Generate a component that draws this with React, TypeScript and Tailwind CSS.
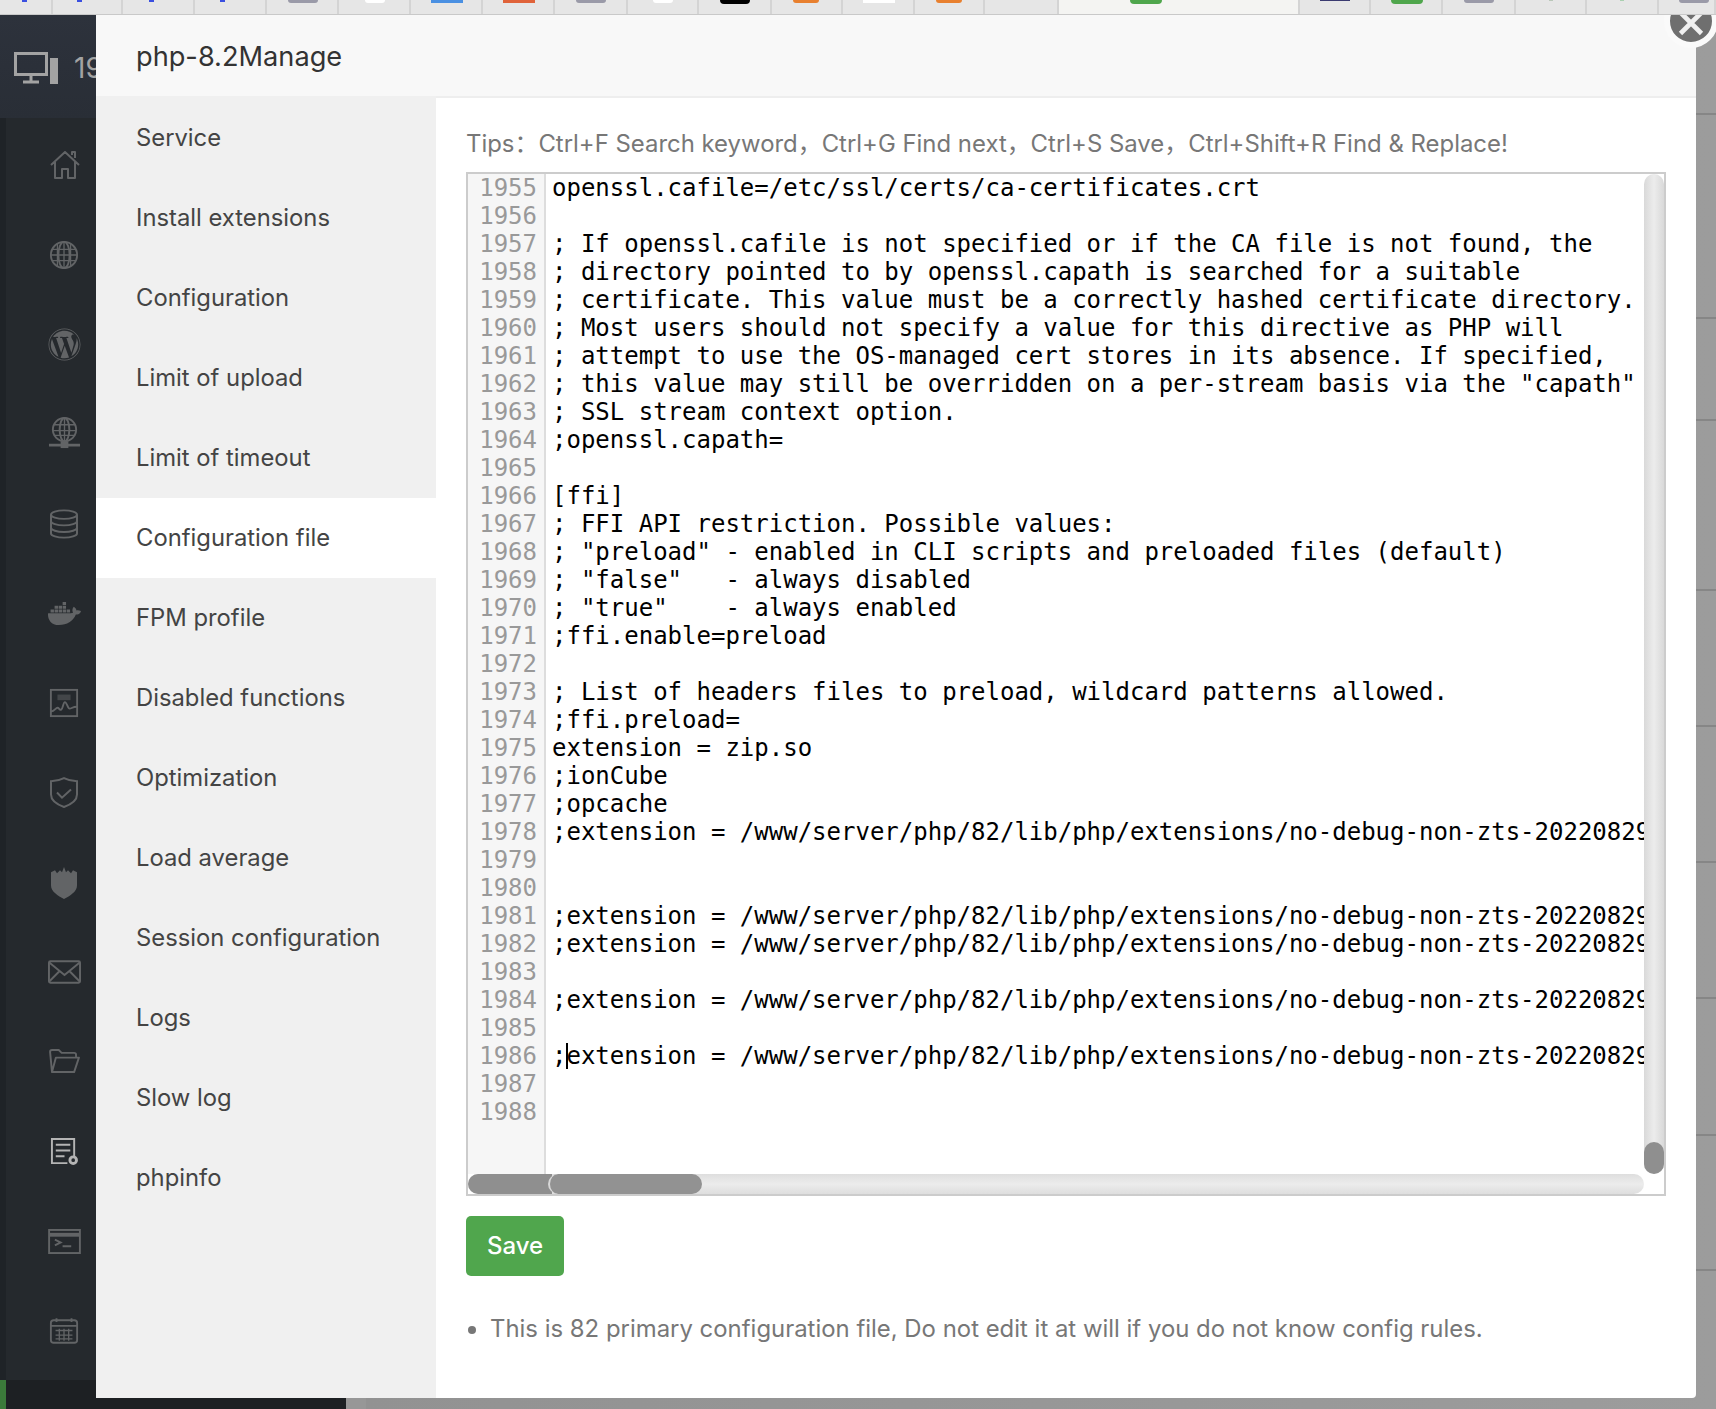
import React from 'react';
import { FaDocker, FaWordpress } from 'react-icons/fa';

const tabs = [
  { w: 'w-[53px]', mark: 'w-[5px] h-[2px] bg-[#3a4fe0]', active: false, pad: 'pl-[22px]' },
  { w: 'w-[70px]', mark: 'w-[5px] h-[2px] bg-[#3a4fe0]', active: false, pad: 'pl-[24px]' },
  { w: 'w-[72px]', mark: 'w-[5px] h-[2px] bg-[#3a4fe0]', active: false, pad: 'pl-[26px]' },
  { w: 'w-[72px]', mark: 'w-[5px] h-[2px] bg-[#3a4fe0]', active: false, pad: 'pl-[25px]' },
  { w: 'w-[72px]', mark: 'w-[30px] h-[3px] bg-[#9a9aa8] rounded-b-lg', active: false, pad: 'pl-[21px]' },
  { w: 'w-[72px]', mark: 'w-[20px] h-[3px] bg-white rounded-b-lg', active: false, pad: 'pl-[26px]' },
  { w: 'w-[72px]', mark: 'w-[32px] h-[3px] bg-[#4a90e2]', active: false, pad: 'pl-[20px]' },
  { w: 'w-[72px]', mark: 'w-[32px] h-[3px] bg-[#e0633a]', active: false, pad: 'pl-[20px]' },
  { w: 'w-[73px]', mark: 'w-[30px] h-[3px] bg-[#9a9aa8] rounded-b-lg', active: false, pad: 'pl-[21px]' },
  { w: 'w-[71px]', mark: 'w-[20px] h-[3px] bg-white rounded-b-lg', active: false, pad: 'pl-[25px]' },
  { w: 'w-[73px]', mark: 'w-[30px] h-[4px] bg-black rounded-b-md', active: false, pad: 'pl-[21px]' },
  { w: 'w-[71px]', mark: 'w-[26px] h-[3px] bg-[#e8802f] rounded-b-lg', active: false, pad: 'pl-[21px]' },
  { w: 'w-[72px]', mark: 'w-[32px] h-[3px] bg-white', active: false, pad: 'pl-[20px]' },
  { w: 'w-[70px]', mark: 'w-[26px] h-[3px] bg-[#e8802f] rounded-b-lg', active: false, pad: 'pl-[21px]' },
  { w: 'w-[74px]', mark: 'w-0 h-0', active: false, pad: 'pl-0' },
  { w: 'w-[241px]', mark: 'w-[32px] h-[4px] bg-[#4fa64c] rounded-b-md', active: true, pad: 'pl-[71px]' },
  { w: 'w-[71px]', mark: 'w-[30px] h-[1px] bg-[#3a3a70]', active: false, pad: 'pl-[20px]' },
  { w: 'w-[72px]', mark: 'w-[32px] h-[4px] bg-[#4fa64c] rounded-b-md', active: false, pad: 'pl-[20px]' },
  { w: 'w-[73px]', mark: 'w-[30px] h-[3px] bg-[#9a9aa8] rounded-b-lg', active: false, pad: 'pl-[21px]' },
  { w: 'w-[71px]', mark: 'w-[4px] h-[1px] bg-[#b9c7b9]', active: false, pad: 'pl-[33px]' },
  { w: 'w-[72px]', mark: 'w-[4px] h-[1px] bg-[#a9d0b0]', active: false, pad: 'pl-[33px]' },
  { w: 'w-[57px]', mark: 'w-[30px] h-[3px] bg-[#9a9aa8] rounded-b-lg', active: false, pad: 'pl-[20px]' },
];

const menu = [
  'Service',
  'Install extensions',
  'Configuration',
  'Limit of upload',
  'Limit of timeout',
  'Configuration file',
  'FPM profile',
  'Disabled functions',
  'Optimization',
  'Load average',
  'Session configuration',
  'Logs',
  'Slow log',
  'phpinfo',
];

const ext = ';extension = /www/server/php/82/lib/php/extensions/no-debug-non-zts-20220829/';

const code = [
  'openssl.cafile=/etc/ssl/certs/ca-certificates.crt',
  '',
  '; If openssl.cafile is not specified or if the CA file is not found, the',
  '; directory pointed to by openssl.capath is searched for a suitable',
  '; certificate. This value must be a correctly hashed certificate directory.',
  '; Most users should not specify a value for this directive as PHP will',
  '; attempt to use the OS-managed cert stores in its absence. If specified,',
  '; this value may still be overridden on a per-stream basis via the "capath"',
  '; SSL stream context option.',
  ';openssl.capath=',
  '',
  '[ffi]',
  '; FFI API restriction. Possible values:',
  '; "preload" - enabled in CLI scripts and preloaded files (default)',
  '; "false"   - always disabled',
  '; "true"    - always enabled',
  ';ffi.enable=preload',
  '',
  '; List of headers files to preload, wildcard patterns allowed.',
  ';ffi.preload=',
  'extension = zip.so',
  ';ionCube',
  ';opcache',
  ext + 'opcache.so',
  '',
  '',
  ext + 'xsl.so',
  ext + 'gmp.so',
  '',
  ext + 'imap.so',
  '',
  ext + 'exif.so',
  '',
  '',
];

const bgRows = [
  'h-[100px]',
  'h-[204px]',
  'h-[102px]',
  'h-[170px]',
  'h-[136px]',
  'h-[136px]',
  'h-[136px]',
  'h-[137px]',
  'h-[135px]',
];

const sw = { fill: 'none', stroke: 'currentColor', strokeWidth: 2 };

const icons = [
  <svg viewBox="0 0 32 32" className="w-[32px] h-[32px] ml-[2px]" {...sw}>
    <path d="M2 16 16 3l14 13M6 13v16h7v-9h6v9h7V13M23 6V3h3v6" strokeLinejoin="round" />
  </svg>,
  <svg viewBox="0 0 32 32" className="w-[30px] h-[30px]" {...sw}>
    <circle cx="16" cy="16" r="14" />
    <ellipse cx="16" cy="16" rx="6" ry="14" />
    <path d="M3 10h26M2 16h28M3 22h26M16 2v28M9 4v24M23 4v24" strokeWidth="1.4" />
  </svg>,
  <FaWordpress className="w-[33px] h-[33px]" />,
  <svg viewBox="0 0 34 34" className="w-[33px] h-[33px]" {...sw}>
    <circle cx="17" cy="13" r="12" />
    <ellipse cx="17" cy="13" rx="5" ry="12" />
    <path d="M6 8h22M5 14h24M6 19h22M17 1v24" strokeWidth="1.4" />
    <path d="M1 29h32" strokeWidth="3" />
    <rect x="13" y="25" width="8" height="7" fill="currentColor" stroke="none" />
  </svg>,
  <svg viewBox="0 0 32 32" className="w-[32px] h-[30px]" {...sw} preserveAspectRatio="none">
    <ellipse cx="16" cy="6" rx="13" ry="4.5" />
    <path d="M3 6v20c0 2.5 6 4.5 13 4.5s13-2 13-4.5V6M3 13c0 2.5 6 4.5 13 4.5s13-2 13-4.5M3 20c0 2.5 6 4.5 13 4.5s13-2 13-4.5" />
  </svg>,
  <FaDocker className="w-[33px] h-[33px]" />,
  <svg viewBox="0 0 32 32" className="w-[30px] h-[30px]" {...sw}>
    <rect x="2" y="2" width="28" height="28" />
    <path d="M2 25c4 0 5-4 7-4s2 3 4 2 2-8 4-8 3 7 5 7 3-2 8-2" />
    <rect x="9" y="7" width="14" height="6" fill="currentColor" stroke="none" opacity="0.5" />
  </svg>,
  <svg viewBox="0 0 32 32" className="w-[32px] h-[33px]" {...sw} preserveAspectRatio="none">
    <path d="M3 5c6 0 9-1 13-3 4 2 7 3 13 3v13c0 6-7 10-13 12C10 28 3 24 3 18Z" />
    <path d="m9 16 5 5 9-8" />
  </svg>,
  <svg viewBox="0 0 32 32" className="w-[32px] h-[33px]" preserveAspectRatio="none">
    <path
      d="M3 6l4-2 2 3 3-3 2 2 2-5 2 5 2-2 3 3 2-3 4 2v13c0 6-7 10-13 13C10 29 3 25 3 19Z"
      fill="currentColor"
    />
  </svg>,
  <svg viewBox="0 0 34 24" className="w-[33px] h-[24px]" {...sw}>
    <rect x="1" y="1" width="32" height="22" rx="1.5" />
    <path d="m1 2 16 13L33 2M1 22l11-11M33 22 22 11" />
  </svg>,
  <svg viewBox="0 0 32 26" className="w-[31px] h-[25px]" {...sw}>
    <path d="M3 24 1 3c0-1 .5-2 2-2h7l3 3h13c1 0 2 1 2 2v2M3 24h23l5-15H7Z" strokeLinejoin="round" />
  </svg>,
  <svg viewBox="0 0 30 30" className="w-[29px] h-[29px] text-[#b4b4b4]" {...sw}>
    <path d="M18 27H2V2h23v18" />
    <path d="M6 8h15M6 14h15M6 20h9" />
    <circle cx="24" cy="24" r="3.4" strokeWidth="3" />
  </svg>,
  <svg viewBox="0 0 34 26" className="w-[33px] h-[25px]" {...sw}>
    <rect x="1" y="1" width="32" height="24" />
    <path d="M1 6h32" strokeWidth="4" />
    <path d="m7 11 6 3-6 3M15 18h9" />
  </svg>,
  <svg viewBox="0 0 32 28" className="w-[30px] h-[27px]" {...sw}>
    <rect x="2" y="3" width="28" height="24" rx="3" />
    <path d="M2 9h28M8 1v4M24 1v4" />
    <path d="M7 14h18M7 19h18M7 23h18M11 12v13M16 12v13M21 12v13" strokeWidth="1.4" />
  </svg>,
];

export default function App() {
  return (
    <div className="relative w-[1716px] h-[1409px] overflow-hidden bg-[#8f8f8f] font-['Inter','Noto_Sans_CJK_SC',sans-serif]">
      {/* browser tab strip */}
      <div className="relative z-20 flex h-[15px] bg-[#e6e6e6] border-b border-[#c9c9c9]">
        {tabs.map((t, i) => (
          <div key={i} className={`${t.w} ${t.pad} h-[14px] shrink-0 border-r-2 border-[#d4d4d4] ${t.active ? 'bg-[#f4f4f2]' : ''}`}>
            <div className={t.mark}></div>
          </div>
        ))}
      </div>

      {/* page behind the dialog */}
      <div className="flex h-[1394px]">
        <div className="w-[346px] shrink-0 flex flex-col bg-[#1d2023]">
          <div className="h-[103px] shrink-0 flex items-center gap-[16px] pl-[14px] pt-[2px] bg-gradient-to-b from-[#2d323c] to-[#292e36] text-[#a3a3a3]">
            <svg viewBox="0 0 44 32" className="w-[44px] h-[32px]" fill="none" stroke="currentColor">
              <rect x="1.5" y="1.5" width="31" height="21" strokeWidth="3" />
              <path d="M9 30h16M17 23v6" strokeWidth="3" />
              <rect x="36" y="6" width="8" height="26" fill="currentColor" stroke="none" />
            </svg>
            <span className="text-[28px] leading-none">19</span>
          </div>
          <div className="h-[1262px] shrink-0 flex bg-[#25292d]">
            <div className="w-[6px] shrink-0 bg-[#1f2327]"></div>
            <div className="flex-1 flex flex-col pt-[2px] text-[#626466]">
              {icons.map((icon, i) => (
                <div key={i} className="h-[89.7px] shrink-0 w-[116px] flex items-center justify-center blur-[0.5px]">
                  {icon}
                </div>
              ))}
            </div>
          </div>
          <div className="flex-1 flex">
            <div className="w-[6px] bg-[#3b7a3a]"></div>
          </div>
        </div>
        <div className="w-[20px] shrink-0 bg-[#979797]"></div>
        <div className="flex-1 flex flex-col bg-gradient-to-r from-[#929292] to-[#9c9c9c]">
          {bgRows.map((r, i) => (
            <div key={i} className={`${r} shrink-0 border-b-2 border-[#868686]`}></div>
          ))}
        </div>
      </div>

      {/* dialog */}
      <div className="absolute left-[96px] top-[14px] z-10 w-[1600px] h-[1384px] flex flex-col bg-white rounded-br-[4px]">
        <div className="h-[82px] shrink-0 flex items-center pl-[40px] pt-[4px] bg-[#f8f8f8] text-[27.2px] text-[#333]">php-8.2Manage</div>
        <div className="flex-1 min-h-0 flex">
          <div className="w-[340px] shrink-0 flex flex-col pt-[2px] bg-[#f0f0f0]">
            {menu.map((m) => (
              <div
                key={m}
                className={`h-[80px] shrink-0 flex items-center pl-[40px] text-[23.8px] text-[#444] ${m === 'Configuration file' ? 'bg-white' : ''}`}
              >
                {m}
              </div>
            ))}
          </div>
          <div className="flex-1 min-w-0 flex flex-col pl-[30px] border-t-2 border-[#eeeeee]">
            <div className="h-[74px] shrink-0 flex items-center pt-[18px] text-[23.92px] text-[#777] whitespace-pre">
              Tips：Ctrl+F Search keyword，Ctrl+G Find next，Ctrl+S Save，Ctrl+Shift+R Find &amp; Replace!
            </div>
            <div className="w-[1200px] h-[1024px] shrink-0 flex flex-col border-2 border-[#cccccc]">
              <div className="flex-1 min-h-0 flex font-['DejaVu_Sans_Mono',monospace] text-[24px] leading-[28px]">
                <div className="w-[78px] shrink-0 pr-[7px] text-right text-[#999] bg-[#f6f6f6] border-r-2 border-[#dddddd]">
                  {code.map((_, i) => (
                    <div key={i} className="h-[28px]">{1955 + i}</div>
                  ))}
                </div>
                <div className="flex-1 min-w-0 overflow-hidden pl-[6px] text-black whitespace-pre">
                  {code.map((line, i) => (
                    <div key={i} className="relative h-[28px]">
                      {line}
                      {i === 31 && <span className="absolute left-[14px] top-[1px] w-[2px] h-[26px] bg-black"></span>}
                    </div>
                  ))}
                </div>
                <div className="w-[20px] shrink-0 flex flex-col justify-end rounded-full bg-gradient-to-r from-[#d9d9d9] via-[#ececec] to-[#d9d9d9]">
                  <div className="h-[32px] rounded-full bg-[#8f8f8f]"></div>
                </div>
              </div>
              <div className="h-[20px] shrink-0 flex">
                <div className="w-[1176px] flex rounded-full bg-gradient-to-b from-[#dedede] via-[#ececec] to-[#dedede]">
                  <div className="w-[84px] rounded-l-full bg-[#8f8f8f]"></div>
                  <div className="w-[154px] -ml-[4px] rounded-full border-l-2 border-[#d8d8d8] bg-[#929292]"></div>
                </div>
              </div>
            </div>
            <button className="mt-[20px] w-[98px] h-[60px] shrink-0 rounded-[5px] bg-[#50a64d] text-[24px] font-medium text-white">Save</button>
            <ul className="mt-[38px] list-disc pl-[24px] text-[23.92px] leading-[30px] text-[#777] marker:text-[#777]">
              <li>This is 82 primary configuration file, Do not edit it at will if you do not know config rules.</li>
            </ul>
          </div>
        </div>
      </div>

      {/* close button, clipped by the tab strip */}
      <div className="absolute left-[1664px] top-[-6px] z-[15] w-[54px] h-[54px] rounded-full border-[6px] border-[#fafafa] bg-[#6f6f6f] flex items-center justify-center">
        <svg viewBox="0 0 24 24" className="w-[28px] h-[28px] mt-[4px]" fill="none" stroke="#f0f0f0" strokeWidth="4">
          <path d="M3 3l18 18M21 3 3 21" />
        </svg>
      </div>
    </div>
  );
}
